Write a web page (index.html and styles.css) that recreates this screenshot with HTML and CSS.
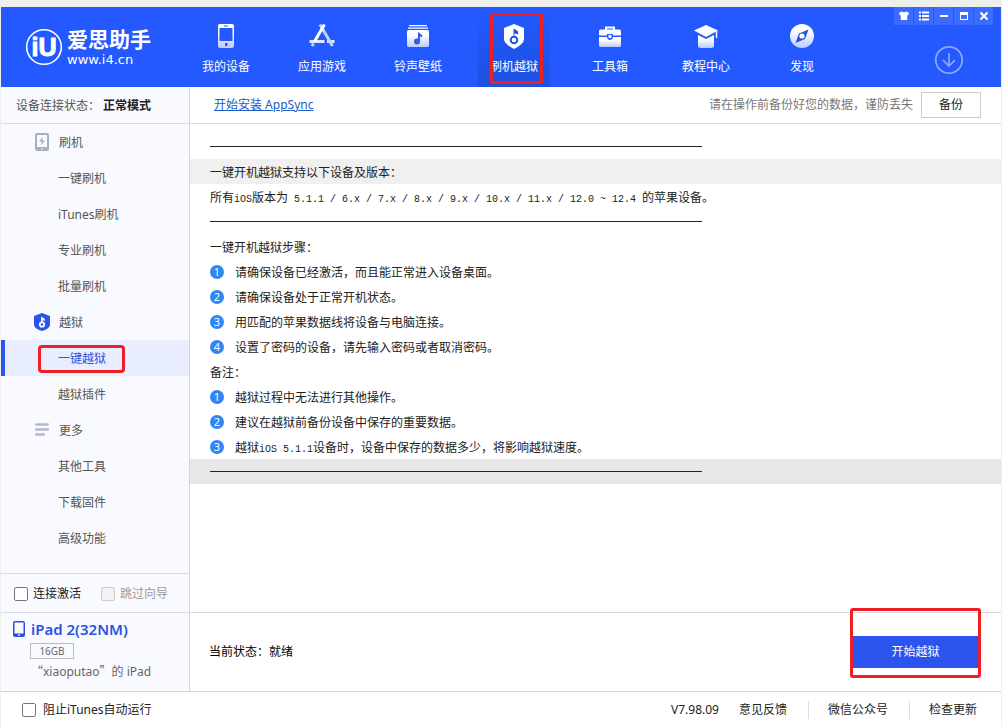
FILE: index.html
```html
<!DOCTYPE html>
<html lang="zh-CN">
<head>
<meta charset="utf-8">
<title>爱思助手</title>
<link rel="stylesheet" href="styles.css">
</head>
<body>
<svg class="defs" width="0" height="0" aria-hidden="true">
  <defs>
    <linearGradient id="fade" x1="0" y1="0" x2="0" y2="1">
      <stop offset="0.3" stop-color="#fff"/><stop offset="1" stop-color="#b9caff"/>
    </linearGradient>
  </defs>
</svg>
<div class="app">
  <header class="header">
    <a class="brand" href="#">
      <svg class="brand-mark" width="38" height="38" viewBox="0 0 38 38" aria-hidden="true">
        <circle cx="19" cy="19" r="17.3" fill="none" stroke="#fff" stroke-width="1.6"/>
        <text class="brand-glyph" x="19" y="28" text-anchor="middle">iU</text>
      </svg>
      <span class="brand-words"><span class="brand-name">爱思助手</span><span class="brand-url">www.i4.cn</span></span>
    </a>
    <nav class="nav">
      <a class="nav-item" href="#">
        <svg width="26" height="26" viewBox="0 0 26 26"><path fill="url(#fade)" fill-rule="evenodd" d="M7 1h12a2 2 0 0 1 2 2v20a2 2 0 0 1-2 2H7a2 2 0 0 1-2-2V3a2 2 0 0 1 2-2zM6.500 5v13h13V5zM11 2.500v1h4v-1zM12 20v3h2.500v-3z"/></svg>
        <span>我的设备</span></a>
      <a class="nav-item" href="#">
        <svg width="26" height="26" viewBox="0 0 26 26" fill="none" stroke-width="3"><path stroke="#dfe7ff" d="M.5 18.500h15M18 18.500h7.500"/><path stroke="#c3d1ff" d="M11 1.500 23.500 23"/><path stroke="#fff" d="M15.500 1.500 5.500 18.500"/><path stroke="#c3d1ff" d="M4.500 20.500 3 23"/></svg>
        <span>应用游戏</span></a>
      <a class="nav-item" href="#">
        <svg width="26" height="26" viewBox="0 0 26 26"><path fill="#fff" d="M4 2h18v1.300H4zM3 4.500h20v1.300H3z"/><rect x="2" y="7" width="22" height="17" rx="1.500" fill="url(#fade)"/><path d="M14 18v-7l3 2.500" fill="none" stroke="#3459e6" stroke-width="2"/><circle cx="12" cy="18.500" r="3" fill="#3459e6"/></svg>
        <span>铃声壁纸</span></a>
      <a class="nav-item active" href="#" aria-current="page">
        <svg width="26" height="26" viewBox="0 0 26 26"><path fill="#fff" d="m13 1 10 4v11q0 5-10 10Q3 21 3 16V5z"/><circle cx="13" cy="17" r="3.300" fill="none" stroke="#2453dd" stroke-width="2"/><path d="M13 14V6l3.500 2.500V11L13 9.500" fill="#2453dd" stroke="#2453dd"/></svg>
        <span>刷机越狱</span></a>
      <a class="nav-item" href="#">
        <svg width="26" height="26" viewBox="0 0 26 26"><path d="M9 8V4.500h8V8" fill="none" stroke="#fff" stroke-width="2"/><path fill="#fff" d="M3.500 6.500h19q1.500 0 1.500 1.500v4.500h-8V11h-6v1.500H2V8q0-1.500 1.500-1.500z"/><path fill="url(#fade)" d="M2 14h8q.5 3 3 3t3-3h8v8.500q0 1.500-1.500 1.500h-19Q2 24 2 22.500z"/><path fill="#fff" d="M11.500 12h3v2.500q-1.500 1.500-3 0z"/></svg>
        <span>工具箱</span></a>
      <a class="nav-item" href="#">
        <svg width="26" height="26" viewBox="0 0 26 26"><path fill="#fff" d="m13 2 12 5.500-12 6.500L1 7.500z"/><path stroke="#fff" stroke-width="1.500" d="M23.500 8v7"/><path fill="url(#fade)" d="m5 12 8 4 8-4v10.500q0 2.500-2.500 2.500h-11Q5 25 5 22.500z"/></svg>
        <span>教程中心</span></a>
      <a class="nav-item" href="#">
        <svg width="26" height="26" viewBox="0 0 26 26"><circle cx="13" cy="13" r="12" fill="url(#fade)"/><path fill="#2453dd" d="m19.500 6.500-3.500 9.500-9.500 4 3.500-9.500z"/><circle cx="13" cy="13" r="2.600" fill="#fff"/></svg>
        <span>发现</span></a>
    </nav>
    <div class="header-end">
      <div class="window-buttons">
        <button aria-label="换肤"><svg width="10" height="10" viewBox="0 0 10 10"><path fill="#fff" d="m0 2 2.500-1.500Q5 2 7.500.5L10 2 9 4.500H8.200V9H1.800V4.500H1z"/></svg></button>
        <button aria-label="菜单"><svg width="10" height="10" viewBox="0 0 10 10"><path stroke="#fff" stroke-width="2" d="M0 1.500h2M3 1.500h7M0 5h2M3 5h7M0 8.500h2M3 8.500h7"/></svg></button>
        <button aria-label="最小化"><svg width="10" height="10" viewBox="0 0 10 10"><path fill="#fff" d="M1 4h8v2H1z"/></svg></button>
        <button aria-label="最大化"><svg width="10" height="10" viewBox="0 0 10 10"><path fill="none" stroke="#fff" d="M1.500 2v6.500h7V2"/><path fill="#fff" d="M1 1h8v3H1z"/></svg></button>
        <button aria-label="关闭"><svg width="10" height="10" viewBox="0 0 10 10"><path stroke="#fff" stroke-width="2.200" d="m1.500 1.500 7 7m0-7-7 7"/></svg></button>
      </div>
      <button class="download" aria-label="下载"><svg width="30" height="30" viewBox="0 0 30 30" fill="none" stroke="#90a9ff" stroke-width="1.700"><circle cx="15" cy="15" r="13.200"/><path d="M15 8v13M9 15l6 6 6-6"/></svg></button>
    </div>
  </header>

  <div class="body">
    <aside class="sidebar">
      <p class="connection">设备连接状态：<b>正常模式</b></p>
      <nav class="menu">
        <a class="menu-group" href="#"><svg width="16" height="18" viewBox="0 0 16 18"><path fill="#a9adbd" fill-rule="evenodd" d="M3 0h10q2 0 2 2v14q0 2-2 2H3q-2 0-2-2V2q0-2 2-2zM3 2v12h10V2zM7 15.500v1h2v-1z"/><path fill="#a9adbd" d="M8.500 4 5 8.500h2.500V12L11 7.500H8.500z"/></svg>刷机</a>
        <a class="menu-item" href="#">一键刷机</a>
        <a class="menu-item" href="#">iTunes刷机</a>
        <a class="menu-item" href="#">专业刷机</a>
        <a class="menu-item" href="#">批量刷机</a>
        <a class="menu-group" href="#"><svg width="16" height="18" viewBox="0 0 16 18"><path fill="#2b53ee" d="m8 0 8 3v8.500Q16 15.500 8 18 0 15.500 0 11.500V3z"/><circle cx="8" cy="11.500" r="2.200" fill="none" stroke="#fff" stroke-width="1.800"/><path fill="#fff" d="M7.200 9.500V3.500L10.800 6v2L8.800 7v2.500z"/></svg>越狱</a>
        <a class="menu-item selected" href="#" aria-current="page"><span>一键越狱</span></a>
        <a class="menu-item" href="#">越狱插件</a>
        <a class="menu-group" href="#"><svg width="16" height="18" viewBox="0 0 16 18"><path stroke="#b5b7cc" stroke-width="2.600" stroke-linecap="round" d="M2.300 3.500h11.400M2.300 8.500h11.400M2.300 13.500h7.400"/></svg>更多</a>
        <a class="menu-item" href="#">其他工具</a>
        <a class="menu-item" href="#">下载固件</a>
        <a class="menu-item" href="#">高级功能</a>
      </nav>
      <div class="options">
        <label><input type="checkbox">连接激活</label>
        <label class="disabled"><input type="checkbox" disabled>跳过向导</label>
      </div>
      <section class="device">
        <h2><svg width="12" height="16" viewBox="0 0 12 16"><path fill="#2b50d8" fill-rule="evenodd" d="M2 0h8q2 0 2 2v12q0 2-2 2H2q-2 0-2-2V2q0-2 2-2zM1.500 1.500v11h9v-11zM5 13.500v1.200h2v-1.200z"/></svg>iPad 2(32NM)</h2>
        <span class="capacity">16GB</span>
        <p><q>xiaoputao</q>的 iPad</p>
      </section>
    </aside>

    <main class="main">
      <div class="toolbar">
        <a href="#">开始安装 AppSync</a>
        <span class="notice">请在操作前备份好您的数据，谨防丢失</span>
        <button class="backup">备份</button>
      </div>
      <article class="guide">
        <div class="row rule"><hr></div>
        <p class="row shaded">一键开机越狱支持以下设备及版本：</p>
        <p class="row">所有<code>iOS</code>版本为<code> 5.1.1 / 6.x / 7.x / 8.x / 9.x / 10.x / 11.x / 12.0 ~ 12.4 </code>的苹果设备。</p>
        <div class="row rule"><hr></div>
        <p class="row">一键开机越狱步骤：</p>
        <p class="row"><i>1</i>请确保设备已经激活，而且能正常进入设备桌面。</p>
        <p class="row"><i>2</i>请确保设备处于正常开机状态。</p>
        <p class="row"><i>3</i>用匹配的苹果数据线将设备与电脑连接。</p>
        <p class="row"><i>4</i>设置了密码的设备，请先输入密码或者取消密码。</p>
        <p class="row">备注：</p>
        <p class="row"><i>1</i>越狱过程中无法进行其他操作。</p>
        <p class="row"><i>2</i>建议在越狱前备份设备中保存的重要数据。</p>
        <p class="row"><i>3</i>越狱<code>iOS 5.1.1</code>设备时，设备中保存的数据多少，将影响越狱速度。</p>
        <div class="row rule shaded-end"><hr></div>
      </article>
      <div class="action-bar">
        <span>当前状态：就绪</span>
        <div class="start-wrap"><button class="start">开始越狱</button></div>
      </div>
    </main>
  </div>

  <footer class="footer">
    <label><input type="checkbox">阻止iTunes自动运行</label>
    <span class="version">V7.98.09</span>
    <a href="#">意见反馈</a>
    <a href="#">微信公众号</a>
    <a href="#">检查更新</a>
  </footer>
</div>
</body>
</html>
```

FILE: styles.css
```css
* { box-sizing: border-box; }
body {
  margin: 0;
  background: #eeefea;
  color: #222;
  font: 12px/18px "Noto Sans", "Noto Sans CJK SC", sans-serif;
}
a { color: inherit; text-decoration: none; }
p, h2 { margin: 0; }
button, input { font: inherit; margin: 0; }
svg { display: block; flex: none; }
.defs { position: absolute; }

.app {
  display: flex;
  flex-direction: column;
  min-height: 100vh;
  padding: 7px 1px 0;
}

/* Header */
.header {
  display: flex;
  height: 80px;
  background: #2359ff;
  color: #fff;
}
.brand {
  display: flex;
  align-items: center;
  gap: 4px;
  width: 177px;
  padding-left: 24px;
}
.brand-glyph {
  font: bold 25px "Liberation Sans", sans-serif;
  fill: #fff;
  stroke: #fff;
}
.brand-words { display: flex; flex-direction: column; }
.brand-name { font-size: 21px; font-weight: 700; line-height: 26px; }
.brand-url { font: 13px/16px "DejaVu Sans", sans-serif; }
.nav { display: flex; }
.nav-item {
  position: relative;
  display: flex;
  flex-direction: column;
  align-items: center;
  gap: 9px;
  width: 96px;
  padding-top: 16px;
}
.nav-item.active {
  background: linear-gradient(#2359ff, #1e50e0) center / 72px 100% no-repeat;
}
.nav-item.active::after {
  content: "";
  position: absolute;
  inset: 6px 19px 3px 24px;
  border: 3px solid #ee1f23;
  border-radius: 3px;
}
.header-end {
  display: flex;
  flex-direction: column;
  align-items: flex-end;
  gap: 20px;
  margin-left: auto;
  padding-right: 8px;
}
.window-buttons { display: flex; gap: 1px; }
.window-buttons button {
  display: flex;
  align-items: center;
  justify-content: center;
  width: 19px;
  height: 18px;
  padding: 0;
  border: 0;
  background: #3b6bff;
}
.download {
  margin-right: 29px;
  padding: 0;
  border: 0;
  background: none;
}

/* Page body */
.body { display: flex; flex: 1; }
.sidebar {
  display: flex;
  flex-direction: column;
  width: 189px;
  background: #f9faff;
  border-right: 1px solid #d3d5dc;
  color: #555;
}
.connection {
  height: 37px;
  padding-left: 15px;
  border-bottom: 1px solid #d9dbe2;
  line-height: 38px;
}
.connection b { margin-left: 3px; color: #222; }
.menu { flex: 1; }
.menu a {
  display: flex;
  align-items: center;
  height: 36px;
  padding-top: 2px;
  padding-left: 57px;
  line-height: 20px;
}
.menu .menu-group { gap: 9px; padding-left: 33px; }
.menu-group svg { margin-bottom: 2px; }
.menu .selected {
  padding-left: 53px;
  border-left: 4px solid #2b53ee;
  background: #e8edff;
  color: #2b53dd;
}
.selected span { position: relative; }
.selected span::after {
  content: "";
  position: absolute;
  inset: -4px -19px -4px -20px;
  border: 3px solid #ee1f23;
  border-radius: 4px;
}
.options {
  display: flex;
  align-items: center;
  gap: 20px;
  height: 39px;
  padding: 1px 0 0 13px;
  border-top: 1px solid #d9dbe2;
  color: #222;
}
label { display: flex; align-items: center; gap: 5px; }
label.disabled { color: #999; }
input[type="checkbox"] {
  appearance: none;
  width: 14px;
  height: 14px;
  border: 1px solid #777;
  border-radius: 2px;
  background: #fff;
}
input[type="checkbox"]:disabled { border-color: #ccc; background: #f1f2f6; }
.device {
  height: 79px;
  padding: 7px 0 0 12px;
  border-top: 1px solid #d9dbe2;
  color: #666;
}
.device h2 {
  display: flex;
  align-items: center;
  gap: 6px;
  color: #2b53e0;
  font-size: 15px;
  font-weight: 600;
  line-height: 18px;
}
.capacity {
  display: block;
  width: 44px;
  height: 16px;
  margin: 5px 0 3px 17px;
  border: 1px solid #bbb;
  font-size: 10px;
  line-height: 14px;
  text-align: center;
}
.device p { padding-left: 18px; }
.device q { quotes: "“" "”"; }
.device q::before,
.device q::after { font-family: "Noto Sans CJK SC", sans-serif; }

/* Main panel */
.main {
  display: flex;
  flex: 1;
  flex-direction: column;
  min-width: 0;
  background: #fff;
}
.toolbar {
  display: flex;
  align-items: center;
  height: 37px;
  padding: 0 20px 0 24px;
  border-bottom: 1px solid #dcdcdc;
}
.toolbar a { color: #1d5bc8; text-decoration: underline; }
.notice { margin-left: auto; color: #777; }
.backup {
  width: 60px;
  height: 26px;
  margin-left: 8px;
  padding: 0;
  border: 1px solid #ccc;
  background: #fff;
  color: #222;
}
.guide {
  flex: 1;
  padding-top: 10px;
  font-family: "Noto Sans CJK SC", sans-serif;
}
.row {
  height: 25px;
  padding-left: 20px;
  line-height: 25px;
}
.row code {
  font-family: "Liberation Mono", monospace;
  font-size: 10px;
  line-height: 1;
  white-space: pre;
}
.rule { display: flex; align-items: center; }
.rule hr {
  width: 492px;
  margin: 0;
  border: 0;
  border-top: 1px solid #222;
}
.row i {
  display: inline-block;
  width: 14px;
  height: 14px;
  margin-right: 11px;
  border-radius: 50%;
  background: #2f86f6;
  color: #fff;
  font: 11px/14px "Noto Sans", sans-serif;
  text-align: center;
  vertical-align: 1px;
}
.shaded { background: #f0f0f0; }
.shaded-end { background: #e7e7e7; }
.action-bar {
  display: flex;
  align-items: center;
  justify-content: space-between;
  height: 79px;
  padding: 0 22px 0 19px;
  border-top: 1px solid #d9d9d9;
  color: #000;
}
.start-wrap { position: relative; }
.start-wrap::after {
  content: "";
  position: absolute;
  inset: -28px -2px -10px;
  border: 3px solid #ee1f23;
  border-radius: 3px;
  pointer-events: none;
}
.start {
  display: block;
  width: 127px;
  height: 32px;
  padding: 0;
  border: 0;
  background: #2b53ee;
  color: #fff;
}

/* Footer */
.footer {
  display: flex;
  align-items: center;
  height: 36px;
  padding: 0 24px 0 21px;
  border-top: 1px solid #d3d5d8;
  background: #fff;
}
.footer label { gap: 7px; }
.version { margin: 0 20px 0 auto; }
.footer a + a {
  margin-left: 21px;
  padding-left: 19px;
  border-left: 1px solid #ddd;
}
```
